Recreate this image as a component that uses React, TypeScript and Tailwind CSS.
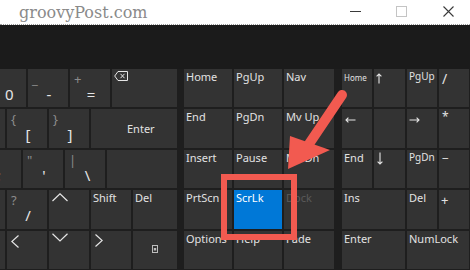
import React from "react";

const F = "font-['Noto_Sans',sans-serif]";

function Key({ w, className = "", children }: { w: string; className?: string; children?: React.ReactNode }) {
  return <div className={`${w} shrink-0 overflow-hidden bg-[#333333] ${className}`}>{children}</div>;
}

function Sym({ w, sec, pri, priClass = "text-center pl-[2px]" }: { w: string; sec?: React.ReactNode; pri?: React.ReactNode; priClass?: string }) {
  return (
    <Key w={w} className="flex flex-col">
      <div className="h-[17px] shrink-0 pl-[4px] pt-[2px] text-[13px] leading-[16px] text-[#8c8c8c]">{sec}</div>
      <div className={`text-[15px] leading-[16px] text-[#e6e6e6] ${priClass}`}>{pri}</div>
    </Key>
  );
}

function Lbl({ w, children, className = "", tc = "text-[#e2e2e2]" }: { w: string; children?: React.ReactNode; className?: string; tc?: string }) {
  return (
    <Key w={w} className={className}>
      <div className={`pl-[2px] text-[11px] leading-[15px] ${tc}`}>{children}</div>
    </Key>
  );
}

const Chev = ({ d, w, h, className }: { d: string; w: number; h: number; className: string }) => (
  <svg width={w} height={h} viewBox={`0 0 ${w} ${h}`} className={className}>
    <polyline points={d} fill="none" stroke="#e6e6e6" strokeWidth="1.2" />
  </svg>
);

export default function App() {
  return (
    <div className={`relative h-[270px] w-[470px] overflow-hidden bg-[#1e1e1e] ${F}`}>
      {/* title bar */}
      <div className="flex h-[25px] items-start border-b border-dotted border-[#9a9a9a] bg-white">
        <div className="pl-[19px] font-['DejaVu_Serif',serif] text-[16px] leading-[25px] text-[#8a8a8a]">groovyPost.com</div>
        <div className="ml-auto flex items-start">
          <svg width="11" height="11" viewBox="0 0 11 11" className="mt-[6px]">
            <line x1="0" y1="5.5" x2="11" y2="5.5" stroke="#3a3a3a" strokeWidth="1" />
          </svg>
          <svg width="11" height="11" viewBox="0 0 11 11" className="ml-[35px] mt-[6px]">
            <rect x="0.5" y="0.5" width="10" height="10" fill="none" stroke="#c4c4c4" strokeWidth="1" />
          </svg>
          <svg width="11" height="11" viewBox="0 0 11 11" className="ml-[36px] mr-[16px] mt-[6px]">
            <path d="M0.5 0.5 L10.5 10.5 M10.5 0.5 L0.5 10.5" stroke="#3a3a3a" strokeWidth="1.1" />
          </svg>
        </div>
      </div>
      <div className="h-[44px] bg-[#1b1b1b]" />

      {/* keyboard */}
      <div className="flex h-[201px]">
        {/* left section */}
        <div className="flex w-[177px] shrink-0 flex-col gap-[2px]">
          <div className="flex h-[38px] gap-[2px]">
            <Sym w="w-[26px]" pri="0" priClass="pl-[5px]" />
            <Sym w="w-[40px]" sec="_" pri="-" />
            <Sym w="w-[40px]" sec="+" pri="=" />
            <Key w="w-[65px]">
              <svg width="14" height="10" viewBox="0 0 14 10" className="ml-[2px] mt-[2px]">
                <path d="M4 0.5 H13.5 V9.5 H4 L0.7 5 Z" fill="none" stroke="#e6e6e6" strokeWidth="1" />
                <path d="M6.5 2.8 L10.5 7.2 M10.5 2.8 L6.5 7.2" stroke="#e6e6e6" strokeWidth="1" />
              </svg>
            </Key>
          </div>
          <div className="flex h-[39px] gap-[2px]">
            <Key w="w-[5px]" />
            <Sym w="w-[40px]" sec="{" pri="[" />
            <Sym w="w-[40px]" sec="}" pri="]" />
            <Key w="w-[86px]" className="flex items-center">
              <div className="pl-[36px] text-[11px] leading-[15px] text-[#e2e2e2]">Enter</div>
            </Key>
          </div>
          <div className="flex h-[38px] gap-[2px]">
            <Sym w="w-[21px]" pri=";" priClass="-ml-[21px] w-[40px] shrink-0 text-center" />
            <Sym w="w-[40px]" sec={'"'} pri="'" />
            <Sym w="w-[40px]" sec="|" pri="\" priClass="text-center pl-[5px]" />
            <Key w="w-[70px]" />
          </div>
          <div className="flex h-[39px] gap-[2px]">
            <Key w="w-[5px]" />
            <Sym w="w-[40px]" sec="?" pri="/" />
            <Key w="w-[40px]">
              <Chev d="0.5,8 8,0.8 15.5,8" w={16} h={9} className="ml-[3px] mt-[3px]" />
            </Key>
            <Lbl w="w-[40px]">Shift</Lbl>
            <Lbl w="w-[44px]">Del</Lbl>
          </div>
          <div className="flex h-[38px] gap-[2px]">
            <Key w="w-[5px]" />
            <Key w="w-[40px]">
              <Chev d="7.5,0.5 0.8,6.5 7.5,12.5" w={8} h={13} className="ml-[4px] mt-[4px]" />
            </Key>
            <Key w="w-[40px]">
              <Chev d="0.5,0.8 8,8 15.5,0.8" w={16} h={9} className="ml-[3px] mt-[2px]" />
            </Key>
            <Key w="w-[40px]">
              <Chev d="0.5,0.5 7.2,6.5 0.5,12.5" w={8} h={13} className="ml-[4px] mt-[3px]" />
            </Key>
            <Key w="w-[44px]">
              <svg width="6" height="8" viewBox="0 0 6 8" className="ml-[19px] mt-[14px]">
                <rect x="0.5" y="0.5" width="5" height="7" fill="none" stroke="#bdbdbd" strokeWidth="1" />
                <rect x="1.8" y="3" width="2.4" height="2.5" fill="#bdbdbd" />
              </svg>
            </Key>
          </div>
        </div>

        <div className="w-[7px] shrink-0" />

        {/* middle section */}
        <div className="flex w-[150px] shrink-0 flex-col gap-[2px]">
          <div className="flex h-[38px] gap-[2px]">
            <Lbl w="w-[48px]">Home</Lbl>
            <Lbl w="w-[48px]">PgUp</Lbl>
            <Lbl w="w-[50px]">Nav</Lbl>
          </div>
          <div className="flex h-[39px] gap-[2px]">
            <Lbl w="w-[48px]">End</Lbl>
            <Lbl w="w-[48px]">PgDn</Lbl>
            <Lbl w="w-[50px]">Mv Up</Lbl>
          </div>
          <div className="flex h-[38px] gap-[2px]">
            <Lbl w="w-[48px]">Insert</Lbl>
            <Lbl w="w-[48px]">Pause</Lbl>
            <Lbl w="w-[50px]">Mv Dn</Lbl>
          </div>
          <div className="flex h-[39px] gap-[2px]">
            <Lbl w="w-[48px]">PrtScn</Lbl>
            <Lbl w="w-[48px]" className="!bg-[#0078d7]" tc="text-white">ScrLk</Lbl>
            <Lbl w="w-[50px]" tc="text-[#5a5a5a]">Dock</Lbl>
          </div>
          <div className="flex h-[38px] gap-[2px]">
            <Lbl w="w-[48px]">Options</Lbl>
            <Lbl w="w-[48px]">Help</Lbl>
            <Lbl w="w-[50px]">Fade</Lbl>
          </div>
        </div>

        <div className="w-[8px] shrink-0" />

        {/* numpad */}
        <div className="flex w-[127px] shrink-0 flex-col gap-[2px]">
          <div className="flex h-[38px] gap-[2px]">
            <Key w="w-[30px]">
              <div className="pl-[2px] pt-[1px] text-[8px] leading-[15px] text-[#e2e2e2]">Home</div>
            </Key>
            <Key w="w-[31px]">
              <svg width="6" height="11" viewBox="0 0 6 11" className="ml-[2px] mt-[4px]">
                <path d="M3 10.5 V1 M0.6 3.4 L3 1 L5.4 3.4" fill="none" stroke="#e6e6e6" strokeWidth="1.1" />
              </svg>
            </Key>
            <Key w="w-[30px]">
              <div className="pl-[2px] text-[10px] leading-[15px] text-[#e2e2e2]">PgUp</div>
            </Key>
            <Key w="w-[30px]">
              <div className="pl-[3px] pt-[1px] text-[14px] leading-[18px] text-[#e2e2e2]">/</div>
            </Key>
          </div>
          <div className="flex h-[39px] gap-[2px]">
            <Key w="w-[30px]">
              <svg width="11" height="6" viewBox="0 0 11 6" className="ml-[3px] mt-[8px]">
                <path d="M10.5 3 H1 M3.4 0.6 L1 3 L3.4 5.4" fill="none" stroke="#e6e6e6" strokeWidth="1.1" />
              </svg>
            </Key>
            <Key w="w-[31px]" />
            <Key w="w-[30px]">
              <svg width="11" height="6" viewBox="0 0 11 6" className="ml-[2px] mt-[8px]">
                <path d="M0.5 3 H10 M7.6 0.6 L10 3 L7.6 5.4" fill="none" stroke="#e6e6e6" strokeWidth="1.1" />
              </svg>
            </Key>
            <Key w="w-[30px]">
              <div className="pl-[3px] text-[12px] leading-[15px] text-[#e2e2e2]">*</div>
            </Key>
          </div>
          <div className="flex h-[38px] gap-[2px]">
            <Lbl w="w-[30px]">End</Lbl>
            <Key w="w-[31px]">
              <svg width="6" height="13" viewBox="0 0 6 13" className="ml-[3px] mt-[2px]">
                <path d="M3 0.5 V12 M0.6 9.6 L3 12 L5.4 9.6" fill="none" stroke="#e6e6e6" strokeWidth="1.1" />
              </svg>
            </Key>
            <Key w="w-[30px]">
              <div className="pl-[2px] text-[10px] leading-[15px] text-[#e2e2e2]">PgDn</div>
            </Key>
            <Key w="w-[30px]">
              <div className="pl-[3px] pt-[1px] text-[12px] leading-[15px] text-[#e2e2e2]">−</div>
            </Key>
          </div>
          <div className="flex h-[39px] gap-[2px]">
            <Lbl w="w-[63px]">Ins</Lbl>
            <Lbl w="w-[30px]">Del</Lbl>
            <Key w="w-[30px]">
              <div className="pl-[2px] pt-[2px] text-[13px] leading-[16px] text-[#e2e2e2]">+</div>
            </Key>
          </div>
          <div className="flex h-[38px] gap-[2px]">
            <Lbl w="w-[63px]">Enter</Lbl>
            <Lbl w="w-[62px]">NumLock</Lbl>
          </div>
        </div>
      </div>

      {/* annotation overlay */}
      <div className="absolute left-[221px] top-[174px] h-[66px] w-[76px] border-[6px] border-[#f25a50]" />
      <svg className="pointer-events-none absolute left-0 top-0" width="470" height="270" viewBox="0 0 470 270">
        <line x1="342" y1="95" x2="309" y2="144" stroke="#f25a50" strokeWidth="10" strokeLinecap="round" />
        <polygon points="290,136 330,150 288,169" fill="#f25a50" />
      </svg>
    </div>
  );
}
